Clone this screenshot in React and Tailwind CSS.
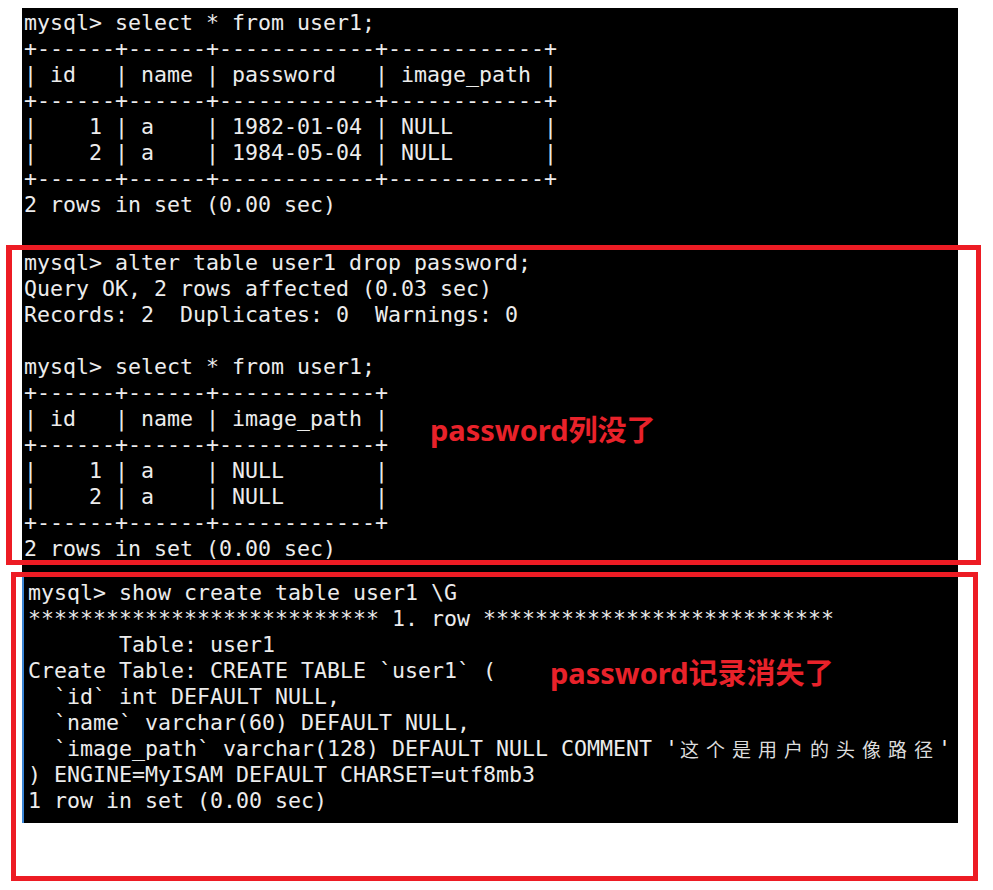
import React from 'react';

const mono = "font-['DejaVu_Sans_Mono','Liberation_Mono',monospace]";

const topLines = [
  'mysql> select * from user1;',
  '+------+------+------------+------------+',
  '| id   | name | password   | image_path |',
  '+------+------+------------+------------+',
  '|    1 | a    | 1982-01-04 | NULL       |',
  '|    2 | a    | 1984-05-04 | NULL       |',
  '+------+------+------------+------------+',
  '2 rows in set (0.00 sec)',
];

const alterLines = [
  'mysql> alter table user1 drop password;',
  'Query OK, 2 rows affected (0.03 sec)',
  'Records: 2  Duplicates: 0  Warnings: 0',
  '',
  'mysql> select * from user1;',
  '+------+------+------------+',
  '| id   | name | image_path |',
  '+------+------+------------+',
  '|    1 | a    | NULL       |',
  '|    2 | a    | NULL       |',
  '+------+------+------------+',
  '2 rows in set (0.00 sec)',
];

const showLines = [
  'mysql> show create table user1 \\G',
  '*************************** 1. row ***************************',
  '       Table: user1',
  'Create Table: CREATE TABLE `user1` (',
  '  `id` int DEFAULT NULL,',
  '  `name` varchar(60) DEFAULT NULL,',
  null, // comment line with chinese text, drawn below
  ') ENGINE=MyISAM DEFAULT CHARSET=utf8mb3',
  '1 row in set (0.00 sec)',
];

const comment = '这个是用户的头像路径';

function Line({ children }) {
  return <div className="h-[26px] leading-[26px] whitespace-pre">{children}</div>;
}

function CommentLine() {
  return (
    <div className="h-[26px] leading-[26px] whitespace-pre flex items-center">
      <span>{"  `image_path` varchar(128) DEFAULT NULL COMMENT '"}</span>
      {comment.split('').map((ch, i) => (
        <span
          key={i}
          className="inline-block w-[26px] pl-[2px] text-[19px] leading-[26px] text-[#dcdcdc] font-['Noto_Sans_CJK_SC',sans-serif]"
        >
          {ch}
        </span>
      ))}
      <span>'</span>
    </div>
  );
}

export default function App() {
  return (
    <div className="relative w-[993px] h-[890px] bg-white overflow-hidden">
      <div className="pt-[8px] pl-[22px]">
        <div className={`w-[936px] bg-black text-[#ececec] text-[21.6px] ${mono}`}>
          {/* first screenshot: select + alter */}
          <div className="pl-[2px] pt-[2px] pb-[13.5px]">
            {topLines.map((l, i) => (
              <Line key={i}>{l}</Line>
            ))}
            <div className="h-[31.5px]" />
            {alterLines.map((l, i) => (
              <Line key={i}>{l}</Line>
            ))}
          </div>

          {/* second screenshot: show create table */}
          <div className="border-l-2 border-[#3b86d6] pl-[4px] pt-[5px] pb-[9px]">
            {showLines.map((l, i) =>
              l === null ? <CommentLine key={i} /> : <Line key={i}>{l}</Line>
            )}
          </div>
        </div>
      </div>

      {/* red annotation boxes */}
      <div className="absolute left-[6px] top-[245px] w-[975px] h-[320px] border-[5px] border-l-[6px] border-[#ed1c24]" />
      <div className="absolute left-[11px] top-[572px] w-[967px] h-[309px] border-[5px] border-[#ed1c24]" />

      {/* annotation notes */}
      <div className="absolute left-[430px] top-[415px] h-[29px] leading-[29px] text-[29px] font-bold text-[#e8222a] whitespace-nowrap font-['Noto_Sans','Noto_Sans_CJK_SC',sans-serif]">
        password列没了
      </div>
      <div className="absolute left-[550px] top-[658px] h-[29px] leading-[29px] text-[29px] font-bold text-[#e8222a] whitespace-nowrap font-['Noto_Sans','Noto_Sans_CJK_SC',sans-serif]">
        password记录消失了
      </div>
    </div>
  );
}
